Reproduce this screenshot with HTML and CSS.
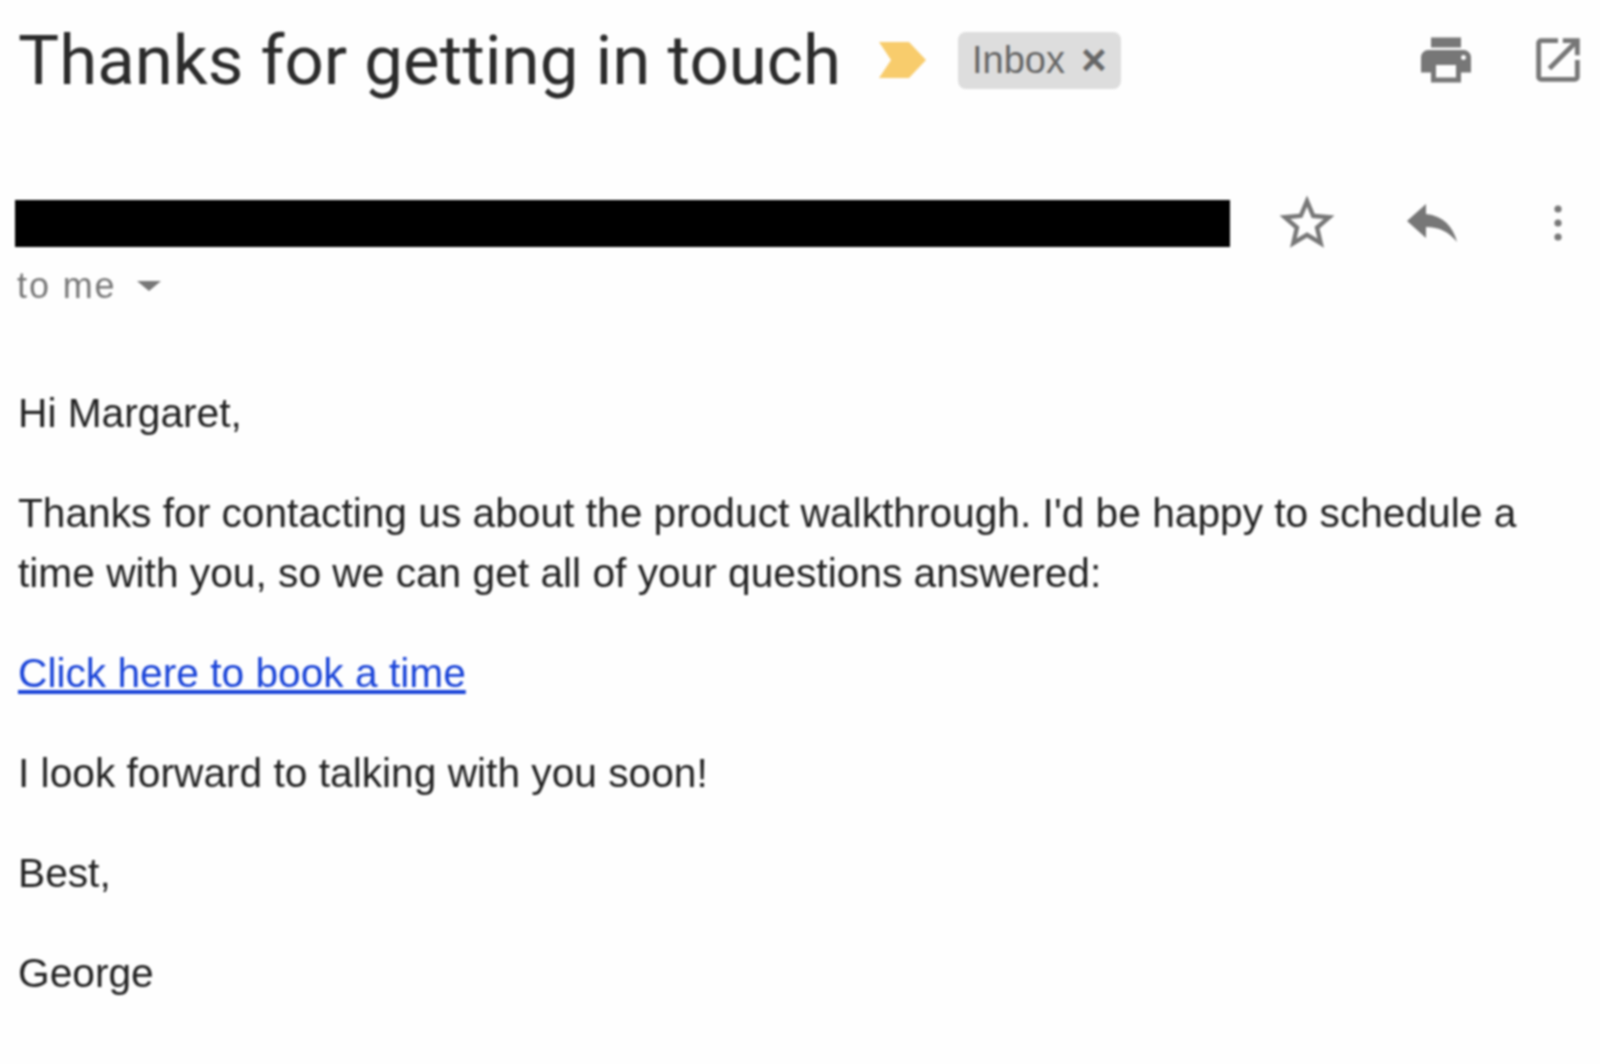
FILE: index.html
```html
<!DOCTYPE html>
<html lang="en">
<head>
  <meta charset="UTF-8" />
  <title>Thanks for getting in touch</title>
  <link rel="stylesheet" href="styles.css">
</head>
<body>
<main class="mail">
  <header class="subject-row">
    <h1 class="subject">Thanks for getting in touch</h1>
    <svg class="marker" viewBox="0 0 47 36"><path d="M0 0H30L47 18 30 36H0L12 18Z"/></svg>
    <span class="label">Inbox <span class="label-x">&#xd7;</span></span>
    <div class="subject-actions">
      <svg class="icon-print" viewBox="0 0 24 24"><path d="M19 8H5c-1.66 0-3 1.34-3 3v6h4v4h12v-4h4v-6c0-1.66-1.34-3-3-3zm-3 11H8v-5h8v5zm3-7c-.55 0-1-.45-1-1s.45-1 1-1 1 .45 1 1-.45 1-1 1zm-1-9H6v4h12V3z"/></svg>
      <svg class="icon-open" viewBox="0 0 24 24"><path d="M19 19H5V5h7V3H5a2 2 0 0 0-2 2v14a2 2 0 0 0 2 2h14a2 2 0 0 0 2-2v-7h-2v7zM14 3v2h3.59l-9.83 9.83 1.41 1.41L19 6.41V10h2V3h-7z"/></svg>
    </div>
  </header>

  <section class="sender-row">
    <div class="redacted"></div>
    <div class="sender-actions">
      <svg class="icon-star" viewBox="0 0 24 24"><path d="M22 9.24l-7.19-.62L12 2 9.19 8.63 2 9.24l5.46 4.73L5.82 21 12 17.27 18.18 21l-1.63-7.03L22 9.24zM12 15.4l-3.76 2.27 1-4.28-3.32-2.88 4.38-.38L12 6.1l1.71 4.04 4.38.38-3.32 2.88 1 4.28L12 15.4z"/></svg>
      <svg class="icon-reply" viewBox="0 0 50 38"><path d="M19 0V10C36 12 46 22 50 38 42 28 32 23 19 23V34L0 17Z"/></svg>
      <svg class="icon-more" viewBox="0 0 8 36"><circle cx="4" cy="4" r="3.6"/><circle cx="4" cy="18" r="3.6"/><circle cx="4" cy="32" r="3.6"/></svg>
    </div>
  </section>

  <div class="recipient">to me <span class="caret"></span></div>

  <article class="body">
    <p>Hi Margaret,</p>
    <p>Thanks for contacting us about the product walkthrough. I'd be happy to schedule a time with you, so we can get all of your questions answered:</p>
    <p><a href="#">Click here to book a time</a></p>
    <p>I look forward to talking with you soon!</p>
    <p>Best,</p>
    <p>George</p>
  </article>
</main>
</body>
</html>
```

FILE: styles.css
```css
body {
  margin: 0;
  background: #fefefe;
  color: #222;
  font-family: "Liberation Sans", Arial, sans-serif;
  overflow: hidden;
}
.mail {
  height: 1064px;
  padding: 0 13px 0 15px;
  box-sizing: border-box;
  filter: blur(1px);
}
.subject-row {
  display: flex;
  align-items: center;
  height: 120px;
}
.subject {
  margin: 0 0 0 3px;
  font-family: Roboto, sans-serif;
  font-size: 69px;
  font-weight: 400;
  color: #2b2b2b;
  white-space: nowrap;
}
.marker {
  width: 47px;
  height: 36px;
  margin-left: 38px;
  fill: #f8cc6c;
}
.label {
  display: flex;
  align-items: center;
  gap: 16px;
  height: 57px;
  margin-left: 32px;
  padding: 0 14px;
  background: #dddddd;
  border-radius: 8px;
  font-size: 38px;
  color: #666;
}
.label-x {
  font-size: 44px;
  font-weight: bold;
}
.subject-actions {
  display: flex;
  align-items: center;
  gap: 53px;
  margin-left: auto;
}
.subject-actions svg, .sender-actions svg {
  fill: #777;
  display: block;
}
.icon-print {
  width: 60px;
  height: 60px;
}
.icon-open {
  width: 58px;
  height: 58px;
}
.sender-row {
  display: flex;
  align-items: center;
  height: 48px;
  margin-top: 79px;
}
.redacted {
  width: 1215px;
  height: 47px;
  background: #000;
}
.sender-actions {
  display: flex;
  align-items: center;
  margin-left: 44px;
  flex: 1;
}
.icon-star {
  width: 66px;
  height: 66px;
}
.icon-reply {
  width: 50px;
  height: 38px;
  margin-left: 67px;
}
.icon-more {
  width: 8px;
  height: 36px;
  margin-left: auto;
  margin-right: 25px;
}
.recipient {
  display: flex;
  align-items: center;
  gap: 20px;
  margin: 18px 0 0 2px;
  font-size: 36px;
  letter-spacing: 1.9px;
  color: #777;
}
.caret {
  width: 0;
  height: 0;
  border-left: 12px solid transparent;
  border-right: 12px solid transparent;
  border-top: 10px solid #777;
}
.body {
  margin: 76px 45px 0 3px;
  font-size: 40.7px;
  line-height: 60px;
}
.body p {
  margin: 0 0 40px;
}
.body a {
  color: #1a44d8;
}
```
